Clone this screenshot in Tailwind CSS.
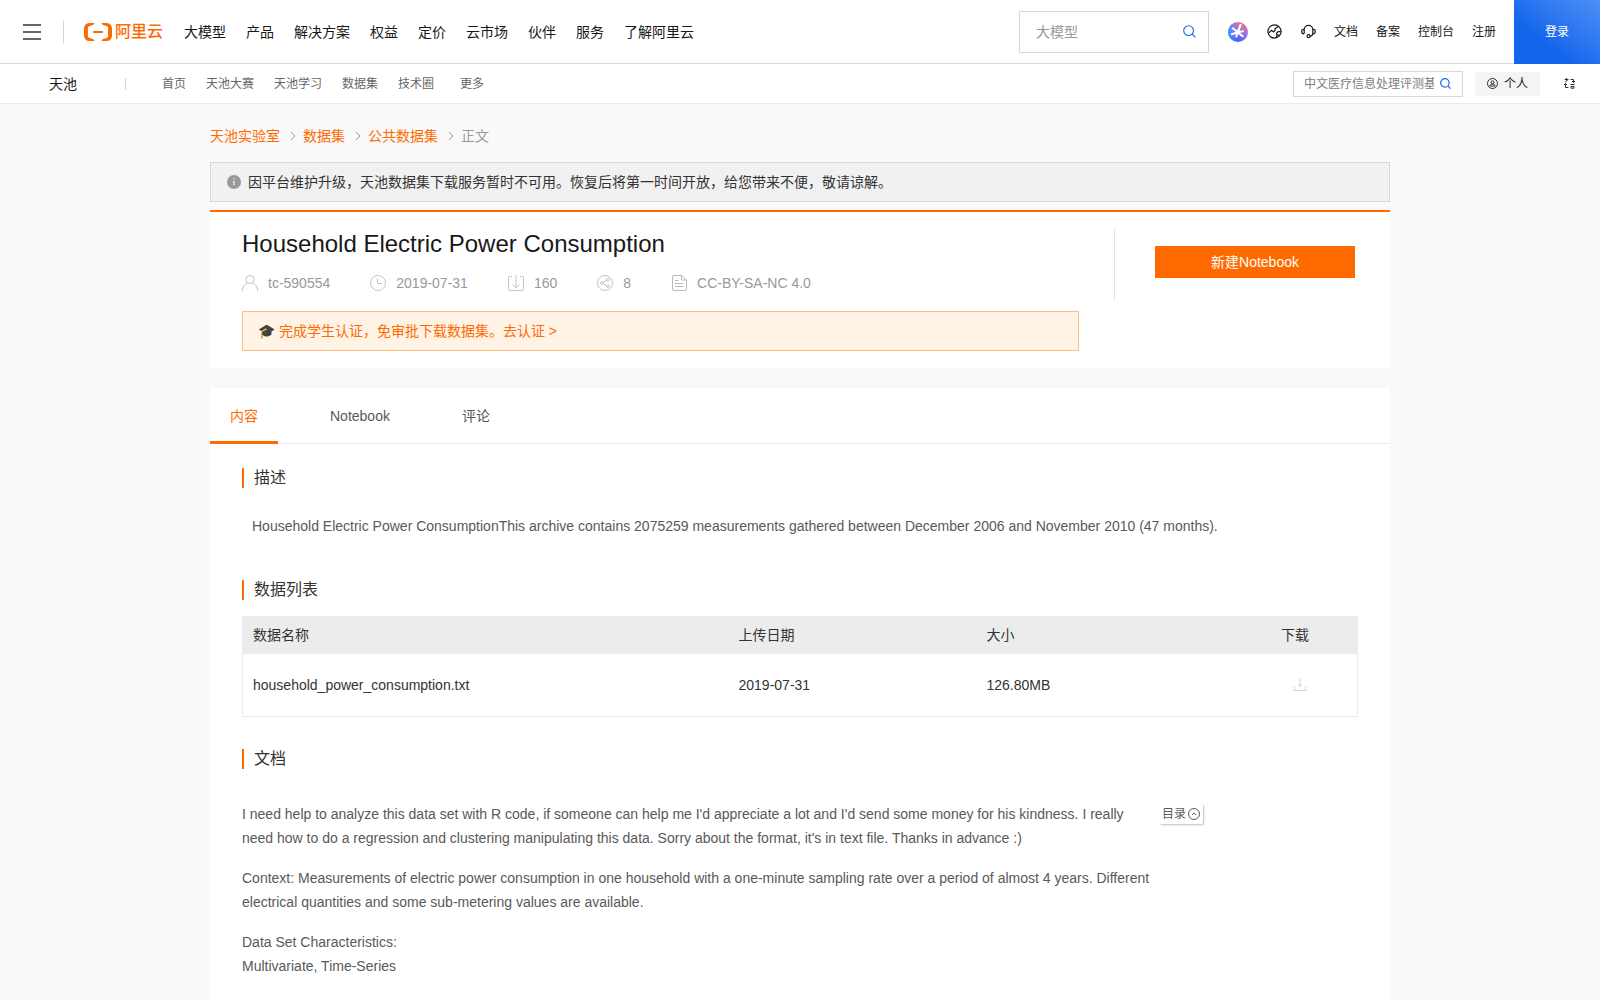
<!DOCTYPE html>
<html lang="zh-CN">
<head>
    <meta charset="UTF-8">
    <meta name="viewport" content="width=device-width, initial-scale=1.0">
    <title>Household Electric Power Consumption - 天池数据集</title>
    <script src="https://cdn.jsdelivr.net/npm/@tailwindcss/browser@4"></script>
</head>
<body class="flex min-h-screen flex-col bg-[#f9f9f9] font-['Liberation_Sans','Noto_Sans_CJK_SC',sans-serif] text-sm text-[#333]">
    <!-- Header -->
    <header class="flex h-16 items-stretch bg-white text-[#181818]">
        <div class="flex flex-1 items-center border-b border-[#d8d8d8] pl-[23px]">
            <button type="button" aria-label="菜单" class="text-[#666]">
                <svg class="h-[18px] w-[18px]" viewBox="0 0 18 18" fill="currentColor">
                    <path d="M0 1h18v2H0zM0 8h18v2H0zM0 15h18v2H0z"/>
                </svg>
            </button>
            <div class="ml-[22px] h-6 w-px bg-[#d8d8d8]"></div>
            <a href="#" class="ml-5 flex items-center gap-[3px] text-base font-medium text-[#ff6a00]">
                <svg class="h-[18px] w-7" viewBox="0 0 28 18" fill="currentColor">
                    <path d="M10.500 0H5.200A5.200 5.200 0 0 0 0 5.200v7.600A5.200 5.200 0 0 0 5.200 18h5.300l-1.300-1.900-3.800-1.200a2.200 2.200 0 0 1-1.500-2V5.100a2.200 2.200 0 0 1 1.500-2l3.800-1.200z"/>
                    <path d="M17.500 0h5.300A5.200 5.200 0 0 1 28 5.200v7.600a5.200 5.200 0 0 1-5.200 5.200h-5.300l1.300-1.900 3.800-1.200a2.200 2.200 0 0 0 1.500-2V5.100a2.200 2.200 0 0 0-1.500-2l-3.800-1.200z"/>
                    <path d="M9.200 8h9.600v2H9.200z"/>
                </svg>
                阿里云
            </a>
            <nav class="ml-[21px] flex gap-5 whitespace-nowrap">
                <a href="#">大模型</a>
                <a href="#">产品</a>
                <a href="#">解决方案</a>
                <a href="#">权益</a>
                <a href="#">定价</a>
                <a href="#">云市场</a>
                <a href="#">伙伴</a>
                <a href="#">服务</a>
                <a href="#">了解阿里云</a>
            </nav>
            <form class="ml-auto flex h-[42px] w-[190px] items-center border border-[#d8d8d8] pr-3 pl-4">
                <input type="text" aria-label="搜索" placeholder="大模型" class="min-w-0 flex-1 outline-none placeholder:text-[#999]">
                <button type="submit" aria-label="搜索" class="text-[#1366ec]">
                    <svg class="h-[13px] w-[13px]" viewBox="0 0 13 13" fill="none" stroke="currentColor" stroke-width="1.1">
                        <circle cx="5.6" cy="5.6" r="4.9"/>
                        <path d="M9.200 9.200l3.200 3.200"/>
                    </svg>
                </button>
            </form>
            <div class="ml-[19px] flex items-center gap-[19px]">
                <a href="#" aria-label="AI 助理">
                    <svg class="h-5 w-5" viewBox="0 0 20 20">
                        <defs>
                            <linearGradient id="ai" x1="0.35" y1="1" x2="0.75" y2="0">
                                <stop offset="0" stop-color="#3a5cff"/>
                                <stop offset="0.5" stop-color="#9272e4"/>
                                <stop offset="1" stop-color="#ec7a84"/>
                            </linearGradient>
                            <linearGradient id="aiLeft" x1="0" y1="0.5" x2="0.45" y2="0.5">
                                <stop offset="0" stop-color="#3f9bff"/>
                                <stop offset="1" stop-color="#3f9bff" stop-opacity="0"/>
                            </linearGradient>
                        </defs>
                        <circle cx="10" cy="10" r="10" fill="url(#ai)"/>
                        <circle cx="10" cy="10" r="10" fill="url(#aiLeft)"/>
                        <path d="M9.700 10.300L12.500 3M9.700 10.300L4.800 6.300M9.700 10.300L3.800 12.200M9.700 10.300l-1.400 4.200M9.700 10.300l5 4M9.700 10.300l5.300-1.100" fill="none" stroke="#fff" stroke-width="2.1" stroke-linecap="round"/>
                    </svg>
                </a>
                <a href="#" aria-label="国际站">
                    <svg class="h-[15px] w-[15px]" viewBox="0 0 15 15" fill="none" stroke="currentColor" stroke-width="1.2">
                        <circle cx="7.5" cy="7.5" r="6.6"/>
                        <path d="M1.600 9.200L4.500 6.300l2 1.600 1.600-1.700V4.600l3.600-2.400M13.800 7.600h-2.600L9.500 9.200l.6 2.300-1.400 2.400M10.200 11.400l2.500-.6"/>
                    </svg>
                </a>
                <a href="#" aria-label="联系我们">
                    <svg class="h-[15px] w-[15px]" viewBox="0 0 15 15" fill="none" stroke="currentColor" stroke-width="1.2">
                        <path d="M3.200 9.600V5.600a4.300 4.300 0 0 1 8.600 0v4M3.200 9.800H2.500A1.700 1.700 0 0 1 .8 8.100V7a1.700 1.700 0 0 1 1.700-1.700h.7M11.800 5.300h.7A1.700 1.700 0 0 1 14.200 7v1.100a1.700 1.700 0 0 1-1.700 1.700h-.7M11.800 9.600c0 1.600-1 2.500-2.900 2.700"/>
                        <circle cx="7.6" cy="12.200" r="1.500"/>
                    </svg>
                </a>
            </div>
            <div class="mx-[18px] flex gap-[18px] text-xs whitespace-nowrap">
                <a href="#">文档</a>
                <a href="#">备案</a>
                <a href="#">控制台</a>
                <a href="#">注册</a>
            </div>
        </div>
        <a href="#" class="flex w-[86px] items-center justify-center bg-linear-to-tr from-[#1366ec] from-35% to-[#4c8ff5] text-xs text-white">登录</a>
    </header>

    <!-- Product nav -->
    <div class="flex h-10 items-center border-b border-[#ebebeb] bg-white pl-[49px] text-xs whitespace-nowrap text-[#666]">
        <a href="#" class="text-sm text-[#181818]">天池</a>
        <div class="ml-12 h-3 w-px bg-[#d8d8d8]"></div>
        <nav class="ml-9 flex gap-5">
            <a href="#">首页</a>
            <a href="#">天池大赛</a>
            <a href="#">天池学习</a>
            <a href="#">数据集</a>
            <a href="#">技术圈</a>
            <a href="#" class="ml-1.5">更多</a>
        </nav>
        <form class="ml-auto flex h-[26px] w-[170px] items-center gap-1.5 border border-[#d8d8d8] pr-[11px] pl-2.5">
            <input type="text" aria-label="搜索数据集" placeholder="中文医疗信息处理评测基准" class="min-w-0 flex-1 outline-none placeholder:text-[#808080]">
            <button type="submit" aria-label="搜索数据集" class="text-[#1366ec]">
                <svg class="h-[11px] w-[11px]" viewBox="0 0 11 11" fill="none" stroke="currentColor" stroke-width="1.2">
                    <circle cx="4.9" cy="4.9" r="4.2"/>
                    <path d="M7.900 7.900l2.700 2.700"/>
                </svg>
            </button>
        </form>
        <button type="button" class="ml-3 flex h-6 items-center gap-1.5 bg-[#f4f4f4] px-3 text-[#181818]">
            <svg class="h-[11px] w-[11px]" viewBox="0 0 11 11" fill="none" stroke="currentColor" stroke-width="0.9">
                <circle cx="5.5" cy="5.5" r="5"/>
                <circle cx="5.5" cy="4.3" r="1.5"/>
                <path d="M2.800 8c.4-1.300 1.400-2 2.700-2s2.300.7 2.700 2z"/>
            </svg>
            个人
        </button>
        <button type="button" aria-label="切换语言" class="mr-[25px] ml-6 text-[#333]">
            <svg class="h-[11px] w-[11px]" viewBox="0 0 11 11" fill="none" stroke="currentColor">
                <path d="M.5 1.500h4M2.500 0v2.500M1 4.500l2.500-2.500M6.500 1.500h3v2.500M8 3l1.500 1.500L11 3M1.500 6v3.500H4.500M0 7l1.500-1.500L3 7M6.500 6.500h4M7 8.500h3v1.700H7z"/>
            </svg>
        </button>
    </div>

    <main class="mx-auto flex w-full max-w-[1180px] flex-1 flex-col">
        <!-- Breadcrumb -->
        <nav aria-label="面包屑" class="flex h-[58px] items-center gap-[7px] pt-1.5 text-[#999]">
            <a href="#" class="text-[#ff6a00]">天池实验室</a>
            <svg class="ml-[3px] h-2.5 w-1.5" viewBox="0 0 6 10" fill="none" stroke="currentColor"><path d="M.8 1l4.200 4-4.200 4"/></svg>
            <a href="#" class="text-[#ff6a00]">数据集</a>
            <svg class="ml-[3px] h-2.5 w-1.5" viewBox="0 0 6 10" fill="none" stroke="currentColor"><path d="M.8 1l4.200 4-4.200 4"/></svg>
            <a href="#" class="text-[#ff6a00]">公共数据集</a>
            <svg class="ml-[3px] h-2.5 w-1.5" viewBox="0 0 6 10" fill="none" stroke="currentColor"><path d="M.8 1l4.200 4-4.200 4"/></svg>
            <span>正文</span>
        </nav>

        <!-- Notice -->
        <div class="flex h-10 items-center gap-[7px] border border-[#d8d8d8] bg-[#f1f1f1] px-4">
            <svg class="h-3.5 w-3.5" viewBox="0 0 14 14">
                <circle cx="7" cy="7" r="7" fill="#999"/>
                <path d="M6.300 3.200h1.400v1.400H6.300zM6 6h1.700v4H6.300V6.800H6z" fill="#f1f1f1"/>
            </svg>
            <p>因平台维护升级，天池数据集下载服务暂时不可用。恢复后将第一时间开放，给您带来不便，敬请谅解。</p>
        </div>

        <!-- Dataset summary -->
        <section class="mt-2 flex items-start border-t-2 border-[#ff6a00] bg-white">
            <div class="flex-1 pt-4 pr-[35px] pb-[17px] pl-8">
                <h1 class="text-2xl text-[#181818]">Household Electric Power Consumption</h1>
                <ul class="mt-[11px] flex gap-10 leading-6 text-[#999]">
                    <li class="flex items-center gap-2.5">
                        <svg class="h-4 w-4" viewBox="0 0 16 16" fill="none" stroke="#c4c4c4">
                            <circle cx="8" cy="4.5" r="4"/>
                            <path d="M.5 16c0-4.500 2.200-7 5-8M15.500 16c0-4.500-2.200-7-5-8"/>
                        </svg>
                        tc-590554
                    </li>
                    <li class="flex items-center gap-2.5">
                        <svg class="h-4 w-4" viewBox="0 0 16 16" fill="none" stroke="#c4c4c4">
                            <circle cx="8" cy="8" r="7.5"/>
                            <path d="M7.500 3.500v5h4.500"/>
                        </svg>
                        2019-07-31
                    </li>
                    <li class="flex items-center gap-2.5">
                        <svg class="h-4 w-4" viewBox="0 0 16 16" fill="none" stroke="#c4c4c4">
                            <path d="M4 1.500H2A1.500 1.500 0 0 0 .5 3v11A1.500 1.500 0 0 0 2 15.500h12a1.500 1.500 0 0 0 1.500-1.500V3A1.500 1.500 0 0 0 14 1.500h-2M8 0v12.500M4.500 9.500L8 12.800l3.500-3.300"/>
                        </svg>
                        160
                    </li>
                    <li class="flex items-center gap-2.5">
                        <svg class="h-4 w-4" viewBox="0 0 16 16" fill="none" stroke="#c4c4c4">
                            <circle cx="8" cy="8" r="7.5"/>
                            <circle cx="4.800" cy="8" r="1.3"/>
                            <circle cx="11" cy="4.800" r="1.3"/>
                            <circle cx="11" cy="11.200" r="1.3"/>
                            <path d="M6 7.300l3.800-2M6 8.700l3.800 2"/>
                        </svg>
                        8
                    </li>
                    <li class="flex items-center gap-2.5">
                        <svg class="h-4 w-4" viewBox="0 0 16 16" fill="none" stroke="#b8b8b8">
                            <path d="M11 .5H3A1.500 1.500 0 0 0 1.500 2v12A1.500 1.500 0 0 0 3 15.500h11a1.500 1.500 0 0 0 1.500-1.500V5zM10.500 .5V5H15M4 5.500h3.500M4 8.500h8.500M4 11.500h8.500"/>
                        </svg>
                        CC-BY-SA-NC 4.0
                    </li>
                </ul>
                <a href="#" class="mt-4 flex h-10 items-center border border-[#ffbe7d] bg-[#fff3e6] px-[15px] text-[#ff6a00]">🎓 完成学生认证，免审批下载数据集。去认证 &gt;</a>
            </div>
            <div class="mt-[17px] h-[72px] border-l border-[#e3e3e3] pt-[17px] pr-[35px] pl-10">
                <button type="button" class="h-8 w-[200px] bg-[#ff6a00] text-white">新建Notebook</button>
            </div>
        </section>

        <!-- Dataset detail -->
        <section class="mt-5 flex-1 bg-white pb-5">
            <div role="tablist" class="flex h-14 gap-8 border-b border-[#ebebeb] text-[#595959]">
                <button type="button" role="tab" aria-selected="true" class="-mb-px border-b-3 border-[#ff6a00] px-5 pt-[3px] text-[#ff6a00]">内容</button>
                <button type="button" role="tab" class="px-5">Notebook</button>
                <button type="button" role="tab" class="px-5">评论</button>
            </div>

            <div class="px-8">
                <h2 class="mt-6 border-l-2 border-[#ff6a00] pl-2.5 text-base leading-5">描述</h2>
                <p class="mt-[26px] px-2.5 leading-6 text-[#595959]">Household Electric Power ConsumptionThis archive contains 2075259 measurements gathered between December 2006 and November 2010 (47 months).</p>

                <h2 class="mt-[42px] border-l-2 border-[#ff6a00] pl-2.5 text-base leading-5">数据列表</h2>
                <table class="mt-4 w-full table-fixed border border-[#ebebeb] text-left">
                    <thead class="bg-[#ececec]">
                        <tr class="h-[37px]">
                            <th scope="col" class="px-2.5 font-normal">数据名称</th>
                            <th scope="col" class="w-[248px] px-2.5 font-normal">上传日期</th>
                            <th scope="col" class="w-[241px] px-2.5 font-normal">大小</th>
                            <th scope="col" class="w-[140px] pr-12 text-right font-normal">下载</th>
                        </tr>
                    </thead>
                    <tbody>
                        <tr class="h-[63px]">
                            <td class="px-2.5">household_power_consumption.txt</td>
                            <td class="px-2.5">2019-07-31</td>
                            <td class="px-2.5">126.80MB</td>
                            <td class="pr-[51px]">
                                <button type="button" aria-label="下载" class="ml-auto block">
                                    <svg class="h-3 w-3" viewBox="0 0 12 12" fill="none" stroke="#d0d0d0">
                                        <path d="M6 0v7M4.200 5.500L6 7.500l1.800-2M.5 8v3.500h11V8"/>
                                    </svg>
                                </button>
                            </td>
                        </tr>
                    </tbody>
                </table>

                <h2 class="mt-8 border-l-2 border-[#ff6a00] pl-2.5 text-base leading-5">文档</h2>
                <div class="mt-[33px] flex items-start gap-[5px] text-[#595959]">
                    <div class="max-w-[912px] space-y-4 leading-6">
                        <p>I need help to analyze this data set with R code, if someone can help me I'd appreciate a lot and I'd send some money for his kindness. I really need how to do a regression and clustering manipulating this data. Sorry about the format, it's in text file. Thanks in advance :)</p>
                        <p>Context: Measurements of electric power consumption in one household with a one-minute sampling rate over a period of almost 4 years. Different electrical quantities and some sub-metering values are available.</p>
                        <p>Data Set Characteristics:<br>Multivariate, Time-Series</p>
                    </div>
                    <button type="button" class="mt-0.5 flex h-5 shrink-0 items-center gap-0.5 rounded-xs px-[3px] text-xs shadow-[1px_1px_2px_rgba(0,0,0,0.25)]">
                        目录
                        <svg class="h-3 w-3" viewBox="0 0 12 12" fill="none" stroke="currentColor">
                            <circle cx="6" cy="6" r="5.5"/>
                            <path d="M4 7l2-2 2 2"/>
                        </svg>
                    </button>
                </div>
            </div>
        </section>
    </main>
</body>
</html>
